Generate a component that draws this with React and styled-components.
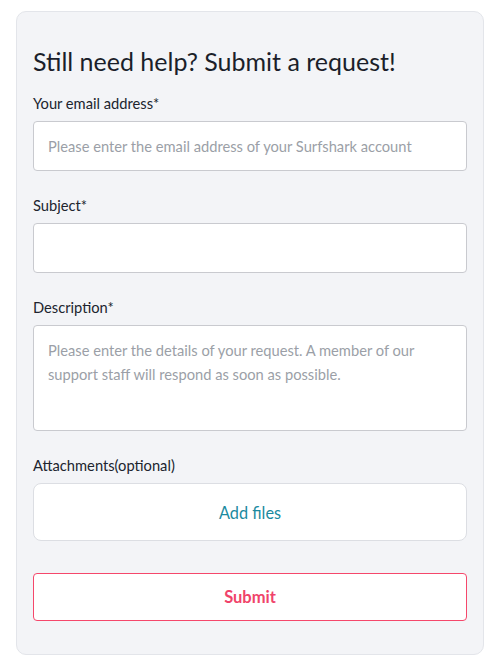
import React from 'react';
import styled, { createGlobalStyle } from 'styled-components';

const Global = createGlobalStyle`
    body{
        margin:0;
        background:#fff;
        font-family:Lato, "Noto Sans", sans-serif;
        color:#1b1f2a;
    }
`;

function App() {
    return (
        <>
            <Global />
            <Page>
                <Card>
                    <Title>Still need help? Submit a request!</Title>
                    <Field>
                        <Label>Your email address*</Label>
                        <Input placeholder="Please enter the email address of your Surfshark account" />
                    </Field>
                    <Field>
                        <Label>Subject*</Label>
                        <Input />
                    </Field>
                    <Field>
                        <Label>Description*</Label>
                        <TextArea placeholder="Please enter the details of your request. A member of our support staff will respond as soon as possible." />
                    </Field>
                    <Field>
                        <Label>Attachments(optional)</Label>
                        <DropZone>Add files</DropZone>
                    </Field>
                    <SubmitButton>Submit</SubmitButton>
                </Card>
            </Page>
        </>
    )
}

const Page = styled.div`
    padding:11px 20px 15px 16px;
`;
const Card = styled.div`
    background:#f3f4f7;
    border:1px solid #e3e5ea;
    border-radius:10px;
    padding:33px 16px 33px 16px;
    display:flex;
    flex-direction:column;
`;
const Title = styled.h2`
    margin:0 0 16px;
    font-size:25px;
    font-weight:400;
    line-height:32px;
    color:#1b1f2a;
`;
const Field = styled.div`
    display:flex;
    flex-direction:column;
    margin-bottom:24px;
`;
const Label = styled.label`
    font-size:14.7px;
    line-height:20px;
    margin-bottom:8px;
    color:#20242e;
`;
const Input = styled.input`
    box-sizing:border-box;
    height:50px;
    border:1px solid #c9cacf;
    border-radius:4px;
    background:#fff;
    padding:0 14px;
    font-family:inherit;
    font-size:14.7px;
    outline:none;
    &::placeholder{
        color:#9b9fa7;
    }
`;
const TextArea = styled.textarea`
    box-sizing:border-box;
    height:106px;
    border:1px solid #c9cacf;
    border-radius:4px;
    background:#fff;
    padding:12px 14px;
    font-family:inherit;
    font-size:14.7px;
    line-height:24px;
    resize:none;
    outline:none;
    &::placeholder{
        color:#9b9fa7;
    }
`;
const DropZone = styled.div`
    box-sizing:border-box;
    height:58px;
    border:1px solid #dcdee3;
    border-radius:8px;
    background:#fff;
    display:flex;
    align-items:center;
    justify-content:center;
    font-size:16.3px;
    color:#1b8aa0;
`;
const SubmitButton = styled.button`
    margin-top:8px;
    height:48px;
    border:1px solid #f5476b;
    border-radius:4px;
    background:#fff;
    color:#f0436a;
    font-family:inherit;
    font-size:16.5px;
    font-weight:700;
    cursor:pointer;
`;

export default App
